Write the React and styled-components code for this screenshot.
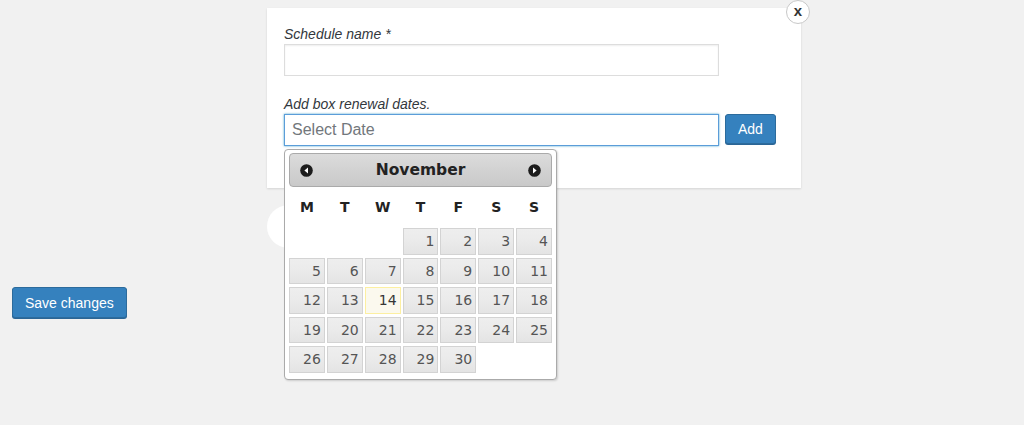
import styled, { createGlobalStyle } from 'styled-components'

const GlobalStyle = createGlobalStyle`
  html, body {
    margin: 0;
    padding: 0;
    background: #f1f1f1;
    font-family: "Liberation Sans", Arial, sans-serif;
    color: #32373c;
  }
`

const Page = styled.div`
  min-height: 425px;
  padding-top: 8px;
  box-sizing: border-box;
`

const Modal = styled.div`
  position: relative;
  margin-left: 267px;
  width: 534px;
  height: 180px;
  box-sizing: border-box;
  padding: 16px 17px 0;
  background: #fff;
  box-shadow: 0 1px 2px rgba(0, 0, 0, 0.12);
  z-index: 2;
`

const CloseButton = styled.button`
  position: absolute;
  top: -8px;
  left: 519px;
  width: 24px;
  height: 24px;
  padding: 0 0 2px;
  border-radius: 50%;
  border: 1px solid #c8c8c8;
  background: #fff;
  font-family: "Liberation Sans", Arial, sans-serif;
  font-weight: bold;
  font-size: 15px;
  line-height: 20px;
  color: #333;
  cursor: pointer;
`

const Label = styled.div`
  font-size: 14px;
  font-style: italic;
  line-height: 20px;
  height: 20px;
  margin-top: ${(p) => p.$gap || 0}px;
`

const TextInput = styled.input`
  display: block;
  box-sizing: border-box;
  width: 435px;
  height: 32px;
  margin: 0;
  padding: 0 7px;
  font-family: "Liberation Sans", Arial, sans-serif;
  font-size: 16px;
  color: #32373c;
  background: #fff;
  border: 1px solid ${(p) => (p.$focused ? '#5b9dd9' : '#ddd')};
  box-shadow: ${(p) =>
    p.$focused ? '0 0 2px rgba(30, 140, 190, 0.8)' : 'inset 0 1px 2px rgba(0,0,0,0.07)'};
  outline: none;
  &::placeholder {
    color: #72777c;
  }
`

const DateRow = styled.div`
  position: relative;
  display: flex;
  align-items: flex-start;
  gap: 6px;
`

const PrimaryButton = styled.button`
  box-sizing: border-box;
  height: ${(p) => p.$h || 30}px;
  padding: 0 ${(p) => p.$px || 12}px;
  margin: 0;
  border-radius: 3px;
  border: 1px solid #2c6b9c;
  background: #3581be;
  box-shadow: 0 1px 0 #2a6596;
  color: #fff;
  font-family: "Liberation Sans", Arial, sans-serif;
  font-size: 14px;
  cursor: pointer;
`

const Popup = styled.div`
  position: absolute;
  top: 35px;
  left: 0;
  width: 273px;
  height: 231px;
  box-sizing: border-box;
  padding: 3px 4px 0 4px;
  background: #fff;
  border: 1px solid #aaa;
  border-radius: 4px;
  box-shadow: 1px 1px 2px rgba(0, 0, 0, 0.15);
  font-family: "DejaVu Sans", Verdana, sans-serif;
  z-index: 5;
`

const Header = styled.div`
  display: flex;
  align-items: center;
  justify-content: space-between;
  height: 34px;
  box-sizing: border-box;
  padding: 0 10px 0 10px;
  border: 1px solid #aaa;
  border-radius: 4px;
  background: linear-gradient(#dcdcdc, #d2d2d2 50%, #c9c9c9);
  color: #222;
`

const Month = styled.span`
  font-size: 15.5px;
  font-weight: bold;
`

const NavIcon = styled.svg`
  width: 13px;
  height: 13px;
  display: block;
`

const DayNames = styled.div`
  display: grid;
  grid-template-columns: repeat(7, 1fr);
  column-gap: 2px;
  height: 40px;
  align-items: center;
`

const DayName = styled.span`
  text-align: center;
  font-size: 14px;
  font-weight: bold;
  color: #222;
`

const Grid = styled.div`
  display: grid;
  grid-template-columns: repeat(7, 1fr);
  grid-auto-rows: 26.5px;
  column-gap: 2px;
  row-gap: 3px;
  padding-top: 1px;
`

const Cell = styled.span`
  box-sizing: border-box;
  display: flex;
  align-items: center;
  justify-content: flex-end;
  padding-right: 3px;
  font-size: 14px;
  color: ${(p) => (p.$today ? '#363636' : '#555')};
  border: 1px solid ${(p) => (p.$today ? '#fcefa1' : '#d3d3d3')};
  background: ${(p) =>
    p.$today ? '#fbf9ee' : 'linear-gradient(#eeeeee, #ebebeb 45%, #e4e4e4)'};
`

const Ghost = styled.div`
  width: 43px;
  height: 43px;
  margin: 17px 0 0 267px;
  border-radius: 50%;
  background: #fff;
`

const Footer = styled.div`
  margin: 39px 0 0 12px;
`

function Arrow({ dir }) {
  const d = dir === 'left' ? 'M8 3.6 L4.4 6.5 L8 9.4 Z' : 'M5 3.6 L8.6 6.5 L5 9.4 Z'
  return (
    <NavIcon viewBox="0 0 13 13">
      <circle cx="6.5" cy="6.5" r="6.3" fill="#1c1c1c" />
      <path d={d} fill="#fff" />
    </NavIcon>
  )
}

const dayNames = ['M', 'T', 'W', 'T', 'F', 'S', 'S']
const offset = 3
const days = Array.from({ length: 30 }, (_, i) => i + 1)

export default function App() {
  return (
    <Page>
      <GlobalStyle />
      <Modal>
        <CloseButton>x</CloseButton>
        <Label>Schedule name *</Label>
        <TextInput type="text" />
        <Label $gap={18}>Add box renewal dates.</Label>
        <DateRow>
          <TextInput type="text" placeholder="Select Date" $focused />
          <PrimaryButton>Add</PrimaryButton>
          <Popup>
            <Header>
              <Arrow dir="left" />
              <Month>November</Month>
              <Arrow dir="right" />
            </Header>
            <DayNames>
              {dayNames.map((n, i) => (
                <DayName key={i}>{n}</DayName>
              ))}
            </DayNames>
            <Grid>
              {Array.from({ length: offset }, (_, i) => (
                <span key={'e' + i} />
              ))}
              {days.map((d) => (
                <Cell key={d} $today={d === 14}>
                  {d}
                </Cell>
              ))}
            </Grid>
          </Popup>
        </DateRow>
      </Modal>
      <Ghost />
      <Footer>
        <PrimaryButton $h={31} $px={12}>Save changes</PrimaryButton>
      </Footer>
    </Page>
  )
}
